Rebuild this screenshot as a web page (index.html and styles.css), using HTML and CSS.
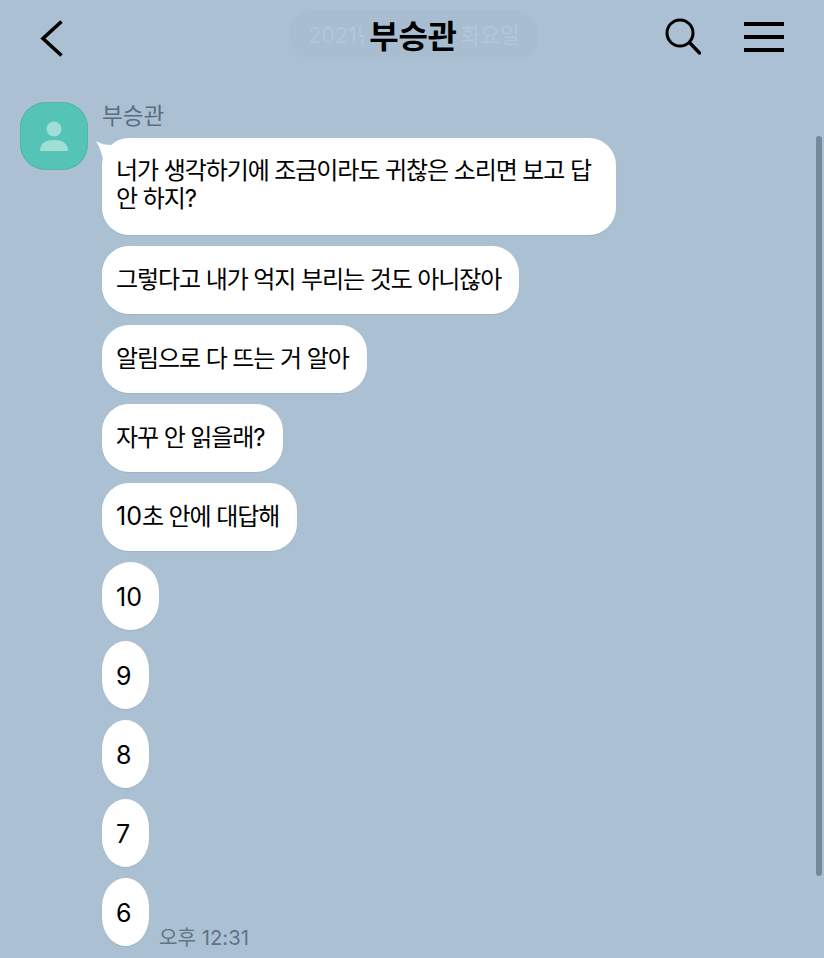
FILE: index.html
```html
<!DOCTYPE html>
<html lang="ko">
<head>
<meta charset="utf-8">
<title>부승관</title>
<link rel="stylesheet" href="styles.css">
</head>
<body>
<div class="screen">
  <header class="header">
    <svg class="back" width="24" height="40" viewBox="0 0 24 40"><path d="M21.5 2.5 L3 19.5 L21.5 36.5" fill="none" stroke="#000" stroke-width="3.6"/></svg>
    <div class="date-pill">2021년 3월 2일 화요일</div>
    <h1 class="title">부승관</h1>
    <div class="actions">
      <svg class="search" width="36" height="38" viewBox="0 0 36 38"><circle cx="15" cy="15" r="13" fill="none" stroke="#000" stroke-width="3"/><path d="M24.5 24.5 L34.5 35" fill="none" stroke="#000" stroke-width="3.4" stroke-linecap="round"/></svg>
      <div class="menu"><span></span><span></span><span></span></div>
    </div>
  </header>
  <main class="chat">
    <div class="avatar">
      <svg width="68" height="68" viewBox="0 0 68 68"><circle cx="34" cy="27" r="7.6" fill="#a0ded6"/><path d="M20 49 C20 41 26 38 34 38 C42 38 48 41 48 49 Z" fill="#a0ded6"/></svg>
    </div>
    <div class="messages">
      <div class="name">부승관</div>
      <div class="bubble first">
        <svg class="tail" width="18" height="24" viewBox="0 0 18 24"><path d="M0 0 C5 3 10 4 16 4 L16 22 L8 22 C6 14 4 6 0 0 Z" fill="#fff"/></svg>
        너가 생각하기에 조금이라도 귀찮은 소리면 보고 답 안 하지?
      </div>
      <div class="bubble">그렇다고 내가 억지 부리는 것도 아니잖아</div>
      <div class="bubble">알림으로 다 뜨는 거 알아</div>
      <div class="bubble">자꾸 안 읽을래?</div>
      <div class="bubble"><span class="num">10</span>초 안에 대답해</div>
      <div class="bubble narrow">10</div>
      <div class="bubble narrow">9</div>
      <div class="bubble narrow">8</div>
      <div class="bubble narrow">7</div>
      <div class="last-row">
        <div class="bubble narrow">6</div>
        <span class="time">오후 12:31</span>
      </div>
    </div>
    <div class="scrollbar"></div>
  </main>
</div>
</body>
</html>
```
FILE: styles.css
```css
* { box-sizing: border-box; }
html, body { margin: 0; padding: 0; }
body {
  background: #abc0d2;
  font-family: Inter, "Noto Sans CJK KR", sans-serif;
  color: #000;
}
.screen {
  width: 824px;
  height: 958px;
  overflow: hidden;
  position: relative;
}
.header {
  height: 102px;
  padding: 19px 40px 0 40px;
  display: flex;
  justify-content: space-between;
  align-items: flex-start;
  position: relative;
}
.back { display: block; }
.date-pill {
  position: absolute;
  left: 289px;
  top: 10px;
  width: 250px;
  height: 50px;
  border-radius: 25px;
  background: #a8bdd0;
  color: #b3c7d8;
  font-size: 21.5px;
  line-height: 50px;
  text-align: center;
  white-space: nowrap;
}
.title {
  position: absolute;
  left: 364px;
  top: 15px;
  width: 98px;
  margin: 0;
  background: #a8bdd0;
  font-size: 32px;
  line-height: 44px;
  font-weight: 700;
  letter-spacing: -0.3px;
  text-align: center;
}
.actions {
  display: flex;
  align-items: flex-start;
  gap: 43px;
}
.search { display: block; margin-top: -1px; }
.menu {
  width: 40px;
  display: flex;
  flex-direction: column;
  gap: 9px;
  margin-top: 3px;
}
.menu span { display: block; height: 4px; background: #000; }
.chat {
  position: relative;
  display: flex;
  align-items: flex-start;
  gap: 14px;
  padding-left: 20px;
}
.avatar {
  width: 68px;
  height: 68px;
  flex: none;
  border-radius: 26px;
  background: #55c4b6;
  box-shadow: inset 0 0 0 1px #50b5aa;
}
.avatar svg { display: block; }
.messages {
  display: flex;
  flex-direction: column;
  align-items: flex-start;
  gap: 11px;
}
.name {
  height: 25px;
  font-size: 22.5px;
  line-height: 28px;
  color: #5b6e7e;
}
.bubble {
  position: relative;
  max-width: 514px;
  height: 68px;
  padding: 20px 18px 20px 14px;
  background: #fff;
  border-radius: 27px;
  font-size: 24px;
  line-height: 28px;
  letter-spacing: -1.08px;
  box-shadow: 0 1px 1px rgba(110, 130, 150, 0.2);
}
.first { width: 514px; height: 97px; padding-top: 19px; }
.num {
  font-size: 25px;
  line-height: 20px;
  letter-spacing: 0;
}
.narrow {
  min-width: 47px;
  padding: 21px 17px 19px 14px;
  border-radius: 50% / 42%;
  font-size: 25px;
  letter-spacing: 0;
}
.tail {
  position: absolute;
  left: -6px;
  top: 3px;
}
.last-row {
  display: flex;
  align-items: flex-end;
  gap: 10px;
}
.time {
  font-size: 20.2px;
  line-height: 20px;
  color: #5f7485;
  margin-bottom: -2px;
}
.scrollbar {
  position: absolute;
  left: 816px;
  top: 34px;
  width: 6px;
  height: 740px;
  border-radius: 3px;
  background: #76899a;
}
```
